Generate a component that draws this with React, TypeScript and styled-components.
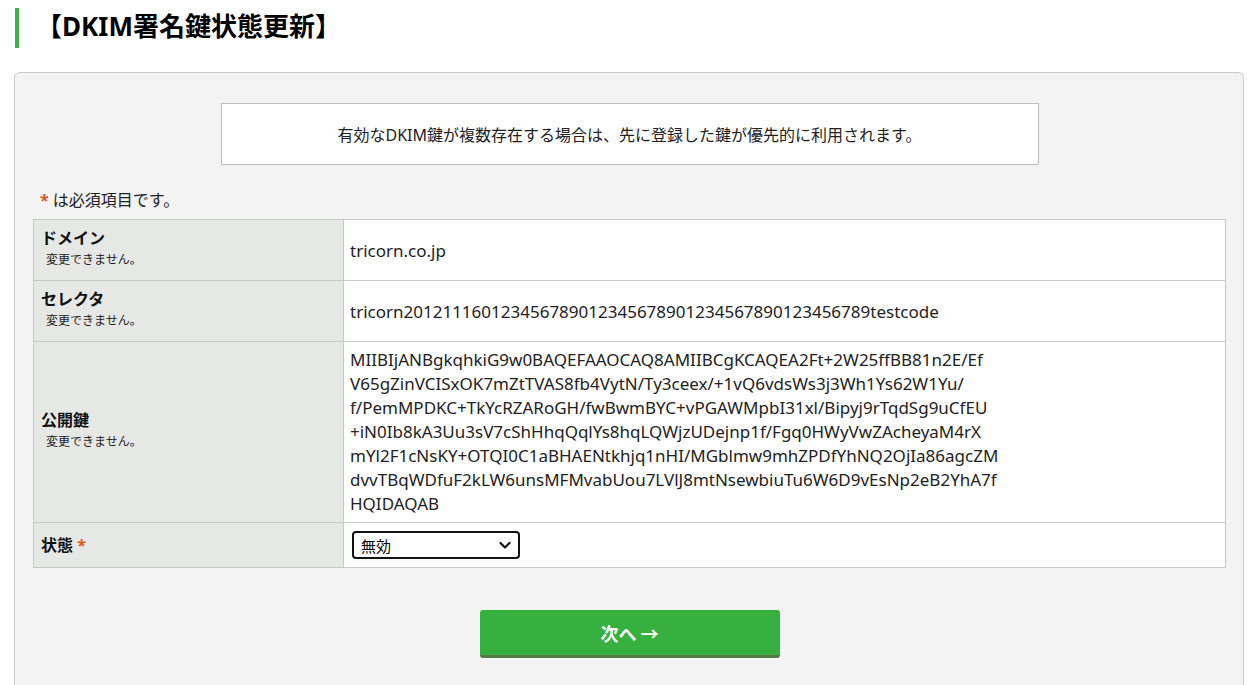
import styled, { createGlobalStyle } from 'styled-components';

const GlobalStyle = createGlobalStyle`
    html, body {
        margin: 0;
        padding: 0;
        background: #fff;
        color: #222;
        font-family: "Noto Sans", "Noto Sans CJK JP", sans-serif;
    }
`;

const publicKey = [
    'MIIBIjANBgkqhkiG9w0BAQEFAAOCAQ8AMIIBCgKCAQEA2Ft+2W25ffBB81n2E/Ef',
    'V65gZinVCISxOK7mZtTVAS8fb4VytN/Ty3ceex/+1vQ6vdsWs3j3Wh1Ys62W1Yu/',
    'f/PemMPDKC+TkYcRZARoGH/fwBwmBYC+vPGAWMpbI31xl/Bipyj9rTqdSg9uCfEU',
    '+iN0Ib8kA3Uu3sV7cShHhqQqlYs8hqLQWjzUDejnp1f/Fgq0HWyVwZAcheyaM4rX',
    'mYl2F1cNsKY+OTQI0C1aBHAENtkhjq1nHI/MGblmw9mhZPDfYhNQ2OjIa86agcZM',
    'dvvTBqWDfuF2kLW6unsMFMvabUou7LVlJ8mtNsewbiuTu6W6D9vEsNp2eB2YhA7f',
    'HQIDAQAB',
];

export default function App() {
    return (
        <>
            <GlobalStyle />
            <Page>
                <Title>【DKIM署名鍵状態更新】</Title>
                <Panel>
                    <Notice>有効なDKIM鍵が複数存在する場合は、先に登録した鍵が優先的に利用されます。</Notice>
                    <RequiredNote><Star>*</Star> は必須項目です。</RequiredNote>
                    <FormTable>
                        <tbody>
                            <tr>
                                <Th $height={60}>
                                    <Label>ドメイン</Label>
                                    <Hint>変更できません。</Hint>
                                </Th>
                                <Td>tricorn.co.jp</Td>
                            </tr>
                            <tr>
                                <Th $height={60}>
                                    <Label>セレクタ</Label>
                                    <Hint>変更できません。</Hint>
                                </Th>
                                <Td>tricorn201211160123456789012345678901234567890123456789testcode</Td>
                            </tr>
                            <tr>
                                <Th>
                                    <Label>公開鍵</Label>
                                    <Hint>変更できません。</Hint>
                                </Th>
                                <Td>
                                    <KeyText>
                                        {publicKey.map((line) => (
                                            <div key={line}>{line}</div>
                                        ))}
                                    </KeyText>
                                </Td>
                            </tr>
                            <tr>
                                <Th $height={44}>
                                    <Label>状態 <Star>*</Star></Label>
                                </Th>
                                <Td>
                                    <SelectWrap>
                                        <Select defaultValue="0">
                                            <option value="0">無効</option>
                                            <option value="1">有効</option>
                                        </Select>
                                        <Chevron width="14" height="14" viewBox="0 0 14 14">
                                            <path d="M2.5 5 L7 9.5 L11.5 5" fill="none" stroke="#111" strokeWidth="2.2" strokeLinecap="round" strokeLinejoin="round" />
                                        </Chevron>
                                    </SelectWrap>
                                </Td>
                            </tr>
                        </tbody>
                    </FormTable>
                    <Actions>
                        <NextButton type="button">次へ →</NextButton>
                    </Actions>
                </Panel>
            </Page>
        </>
    );
}

const Page = styled.div`
    display: flex;
    flex-direction: column;
    padding: 8px 13px 0 14px;
    min-height: 100vh;
    box-sizing: border-box;
`;

const Title = styled.h1`
    margin: 0 0 0 1px;
    height: 40px;
    line-height: 36px;
    border-left: 4px solid #3cb043;
    padding-left: 17px;
    font-size: 26px;
    font-weight: bold;
    color: #000;
`;

const Panel = styled.div`
    flex: 1;
    margin-top: 24px;
    padding: 30px 17px 40px 18px;
    background: #f3f3f3;
    border: 1px solid #cccccc;
    border-bottom: none;
    border-radius: 6px 6px 0 0;
`;

const Notice = styled.div`
    width: 816px;
    height: 60px;
    margin: 0 auto;
    display: flex;
    align-items: center;
    justify-content: center;
    background: #fff;
    border: 1px solid #bdbdbd;
    font-size: 16px;
    color: #222;
`;

const RequiredNote = styled.div`
    margin: 24px 0 8px;
    padding-left: 7px;
    font-size: 16px;
    line-height: 22px;
`;

const Star = styled.span`
    color: #e0561c;
    font-weight: bold;
`;

const FormTable = styled.table`
    width: 100%;
    border-collapse: collapse;
    background: #fff;
`;

const Th = styled.th<{ $height?: number }>`
    width: 295px;
    height: ${(p) => (p.$height ? `${p.$height}px` : 'auto')};
    padding: 0 7px;
    background: #e6e8e6;
    border: 1px solid #c8c8c8;
    text-align: left;
    vertical-align: middle;
`;

const Label = styled.div`
    font-size: 16px;
    font-weight: bold;
    line-height: 20px;
    color: #111;
`;

const Hint = styled.div`
    padding-left: 5px;
    font-size: 12px;
    font-weight: normal;
    line-height: 24px;
    color: #222;
`;

const Td = styled.td`
    padding: 6px 6px;
    border: 1px solid #c8c8c8;
    font-size: 17px;
    vertical-align: middle;
    color: #222;
`;

const KeyText = styled.div`
    line-height: 24px;
`;

const SelectWrap = styled.div`
    position: relative;
    width: 168px;
    margin-left: 2px;
`;

const Select = styled.select`
    appearance: none;
    width: 168px;
    height: 28px;
    padding: 0 24px 0 7px;
    border: 2px solid #111;
    border-radius: 4px;
    background: #fff;
    font-family: "Noto Sans CJK JP", sans-serif;
    font-size: 15px;
    color: #000;
`;

const Chevron = styled.svg`
    position: absolute;
    right: 8px;
    top: 7px;
    pointer-events: none;
`;

const Actions = styled.div`
    display: flex;
    justify-content: center;
    margin-top: 42px;
`;

const NextButton = styled.button`
    width: 300px;
    height: 48px;
    background: #36b03f;
    border: none;
    border-bottom: 3px solid #567a4a;
    border-radius: 3px;
    color: #fff;
    font-family: "Noto Sans CJK JP", sans-serif;
    font-size: 18px;
    font-weight: bold;
    cursor: pointer;
`;
